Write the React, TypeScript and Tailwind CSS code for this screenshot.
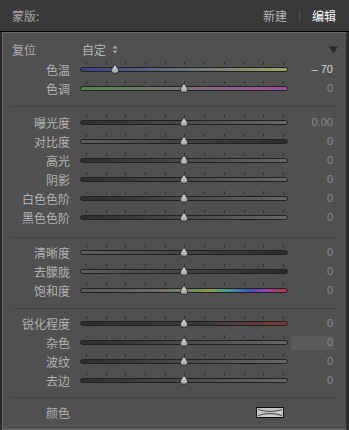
import React from "react";

type SliderRow = {
  label: string;
  value: string;
  pos: number;
  track: string;
  bright?: boolean;
  boxed?: boolean;
};

const FONT = "font-['Noto_Sans_CJK_SC','Noto_Sans',sans-serif]";
const NUM_FONT = "font-['Liberation_Sans',Arial,sans-serif]";

const DARK_UP = "bg-gradient-to-r from-[#2e2e2e] to-[#676767]";
const LIGHT_DOWN = "bg-gradient-to-r from-[#5e5e5e] to-[#2a2a2a]";

const toneRows: SliderRow[] = [
  { label: "色温", value: "– 70", pos: 0.17, track: "bg-gradient-to-r from-[#3e3e88] to-[#a0a262]", bright: true },
  { label: "色调", value: "0", pos: 0.5, track: "bg-gradient-to-r from-[#4c8a48] to-[#a24ca2]" },
];

const lightRows: SliderRow[] = [
  { label: "曝光度", value: "0.00", pos: 0.5, track: DARK_UP },
  { label: "对比度", value: "0", pos: 0.5, track: LIGHT_DOWN },
  { label: "高光", value: "0", pos: 0.5, track: DARK_UP },
  { label: "阴影", value: "0", pos: 0.5, track: DARK_UP },
  { label: "白色色阶", value: "0", pos: 0.5, track: DARK_UP },
  { label: "黑色色阶", value: "0", pos: 0.5, track: DARK_UP },
];

const presenceRows: SliderRow[] = [
  { label: "清晰度", value: "0", pos: 0.5, track: LIGHT_DOWN },
  { label: "去朦胧", value: "0", pos: 0.5, track: LIGHT_DOWN },
  {
    label: "饱和度",
    value: "0",
    pos: 0.5,
    track:
      "bg-[linear-gradient(to_right,#5a5a5a_0%,#6a6a6a_35%,#6f8f5c_55%,#8f9a4a_62%,#3f9a9a_72%,#4450c0_82%,#9a44a8_90%,#b23838_100%)]",
  },
];

const detailRows: SliderRow[] = [
  { label: "锐化程度", value: "0", pos: 0.5, track: "bg-[linear-gradient(to_right,#2c2c2c_0%,#3a3a3a_60%,#7c3a34_100%)]" },
  { label: "杂色", value: "0", pos: 0.5, track: DARK_UP, boxed: true },
  { label: "波纹", value: "0", pos: 0.5, track: DARK_UP },
  { label: "去边", value: "0", pos: 0.5, track: DARK_UP },
];

const TRACK_W = 208;

const Thumb = () => (
  <svg width="10" height="10" viewBox="0 0 10 10">
    <defs>
      <linearGradient id="thumbFill" x1="0" y1="0" x2="0" y2="1">
        <stop offset="0%" stopColor="#e2e2e2" />
        <stop offset="100%" stopColor="#9c9c9c" />
      </linearGradient>
    </defs>
    <path
      d="M5 0.4 L8.2 5 Q9.8 9.3 5 9.3 Q0.2 9.3 1.8 5 Z"
      fill="url(#thumbFill)"
      stroke="#2a2a2a"
      strokeWidth="0.8"
    />
  </svg>
);

const Slider = ({ track, pos }: { track: string; pos: number }) => (
  <div className="relative w-[208px] h-[19px] shrink-0">
    <div className="absolute left-[6px] right-[4px] top-[2px] flex justify-between">
      {Array.from({ length: 11 }).map((_, i) => (
        <span key={i} className="block w-px h-[3px] bg-[#303030]" />
      ))}
    </div>
    <div className={`absolute left-0 right-0 top-[7px] h-[5px] rounded-full border border-[#222222] ${track}`} />
    <div className="absolute top-[4px]" style={{ left: pos * TRACK_W - 5 }}>
      <Thumb />
    </div>
  </div>
);

const Row = ({ row }: { row: SliderRow }) => (
  <div className="flex items-center h-[19px]">
    <div className="w-[67px] text-right text-[12px] leading-none text-[#b2b2b2]">{row.label}</div>
    <div className="ml-[10px]">
      <Slider track={row.track} pos={row.pos} />
    </div>
    <div
      className={`ml-[3px] w-[43px] h-[14px] flex items-center justify-end pr-[1px] text-[11px] leading-none ${NUM_FONT} ${
        row.boxed ? "bg-[#5a5a5a]" : ""
      } ${row.bright ? "text-[#d6d6d6]" : "text-[#8a8a8a]"}`}
    >
      {row.value}
    </div>
  </div>
);

const Divider = ({ className }: { className: string }) => (
  <div className={`mx-[9px] h-px bg-[#444444] ${className}`} />
);

export default function App() {
  return (
    <div className={`w-[349px] h-[430px] bg-[#2c2c2c] overflow-hidden ${FONT}`}>
      <div className="h-[32px] bg-[#3a3a3a] border-b border-black flex items-center pl-[12px] pr-[13px]">
        <span className="text-[12px] text-[#a2a2a2]">蒙版:</span>
        <div className="ml-auto flex items-center">
          <span className="text-[12px] text-[#b4b4b4]">新建</span>
          <span className="mx-[12px] w-px h-[12px] bg-[#505050]" />
          <span className="text-[12px] text-white">编辑</span>
        </div>
      </div>

      <div className="ml-[2px] w-[345px] h-[398px] bg-[#505050] border border-[#6a6a6a] border-r-[#2e2e2e]">
        <div className="mt-[6px] h-[21px] flex items-center pl-[9px] pr-[8px]">
          <span className="text-[12px] text-[#aeaeae]">复位</span>
          <span className="ml-[46px] text-[12px] text-[#b4b4b4]">自定</span>
          <svg className="ml-[6px]" width="6" height="9" viewBox="0 0 6 9">
            <path d="M3 0.5 L5.5 3.5 L0.5 3.5 Z" fill="#a8a8a8" />
            <path d="M3 8.5 L5.5 5.5 L0.5 5.5 Z" fill="#a8a8a8" />
          </svg>
          <svg className="ml-auto" width="9" height="8" viewBox="0 0 9 8">
            <path d="M0 0.5 L9 0.5 L4.5 7.5 Z" fill="#262626" />
          </svg>
        </div>

        {toneRows.map((r) => (
          <Row key={r.label} row={r} />
        ))}
        <Divider className="mt-[8px]" />

        <div className="mt-[6px]">
          {lightRows.map((r) => (
            <Row key={r.label} row={r} />
          ))}
        </div>
        <Divider className="mt-[10px]" />

        <div className="mt-[5px]">
          {presenceRows.map((r) => (
            <Row key={r.label} row={r} />
          ))}
        </div>
        <Divider className="mt-[8px]" />

        <div className="mt-[5px]">
          {detailRows.map((r) => (
            <Row key={r.label} row={r} />
          ))}
        </div>
        <Divider className="mt-[7px]" />

        <div className="mt-[5px] flex items-center h-[19px]">
          <div className="w-[67px] text-right text-[12px] leading-none text-[#b2b2b2]">颜色</div>
          <svg className="ml-[186px]" width="28" height="11" viewBox="0 0 28 11">
            <rect x="0.5" y="0.5" width="27" height="10" fill="#c6c6c6" stroke="#111" />
            <path d="M2 2.5 Q14 6.5 26 2.5" stroke="#3a3a3a" strokeWidth="0.9" fill="none" />
            <path d="M2 8.5 Q14 4.5 26 8.5" stroke="#3a3a3a" strokeWidth="0.9" fill="none" />
          </svg>
        </div>
      </div>
    </div>
  );
}
